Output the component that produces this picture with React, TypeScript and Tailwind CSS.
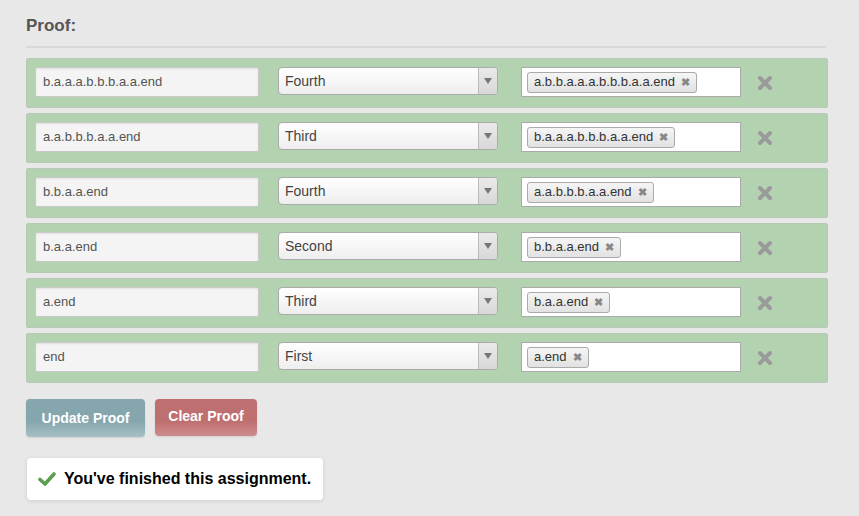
const rows = [
  { line: "b.a.a.a.b.b.b.a.a.end", rule: "Fourth", cite: "a.b.b.a.a.a.b.b.b.a.a.end" },
  { line: "a.a.b.b.b.a.a.end", rule: "Third", cite: "b.a.a.a.b.b.b.a.a.end" },
  { line: "b.b.a.a.end", rule: "Fourth", cite: "a.a.b.b.b.a.a.end" },
  { line: "b.a.a.end", rule: "Second", cite: "b.b.a.a.end" },
  { line: "a.end", rule: "Third", cite: "b.a.a.end" },
  { line: "end", rule: "First", cite: "a.end" },
];

function RemoveIcon() {
  return (
    <svg width="16" height="16" viewBox="0 0 16 16" className="shrink-0">
      <path d="M3 3 L13 13 M13 3 L3 13" stroke="#9a9a9a" strokeWidth="4" strokeLinecap="round" />
    </svg>
  );
}

function ProofRow({ line, rule, cite }: { line: string; rule: string; cite: string }) {
  return (
    <div className="flex items-start h-[50px] border border-[#b9c9b7] rounded-[2px] bg-[#b2d2b0] pt-2 pl-2">
      <div className="w-[224px] h-[30px] flex items-center px-[7px] bg-[#f4f4f4] border border-[#c9c9c9] rounded-[2px] shadow-[inset_0_1px_2px_rgba(0,0,0,0.08)] text-[13px] text-[#555]">
        {line}
      </div>
      <div className="ml-[19px] w-[220px] h-[28px] flex border border-[#aaa] rounded-[4px] bg-gradient-to-b from-white to-[#eeeeee] overflow-hidden">
        <div className="flex-1 flex items-center px-[6px] text-[14px] text-[#444]">{rule}</div>
        <div className="w-[19px] flex items-center justify-center border-l border-[#bbb] bg-gradient-to-b from-[#eaeaea] to-[#d8d8d8]">
          <svg width="8" height="6" viewBox="0 0 8 6">
            <path d="M0 0 L8 0 L4 6 Z" fill="#777" />
          </svg>
        </div>
      </div>
      <div className="ml-[23px] w-[220px] h-[30px] flex items-center pl-[5px] bg-white border border-[#aaa]">
        <div className="h-[21px] flex items-center gap-[6px] pl-[6px] pr-[6px] border border-[#aaa] rounded-[3px] bg-gradient-to-b from-[#f5f5f5] to-[#e2e2e2] text-[13px] text-[#333]">
          <span>{cite}</span>
          <span className="text-[#888] text-[11px] font-bold leading-none">✖</span>
        </div>
      </div>
      <div className="ml-[16px] mt-[8px]">
        <RemoveIcon />
      </div>
    </div>
  );
}

export default function App() {
  return (
    <div className="min-h-[516px] bg-[#e8e8e8] font-['Liberation_Sans',Arial,sans-serif] pl-[26px] pt-[16px]">
      <div className="w-[802px]">
        <h2 className="text-[17px] font-bold text-[#555] leading-[20px]">Proof:</h2>
        <div className="mt-[10px] mr-[2px] h-[2px] bg-[#d8d8d8]" />
        <div className="mt-[10px] flex flex-col gap-[5px]">
          {rows.map((r, i) => (
            <ProofRow key={i} {...r} />
          ))}
        </div>
        <div className="mt-[16px] flex items-start gap-[10px]">
          <button className="w-[119px] h-[38px] rounded-[4px] bg-gradient-to-b from-[#86a6ae] from-60% to-[#a6c1c6] text-white font-bold text-[14px] shadow-[0_1px_2px_rgba(0,0,0,0.1)]">
            Update Proof
          </button>
          <button className="w-[102px] h-[37px] pb-[2px] rounded-[4px] bg-gradient-to-b from-[#be6f6f] from-60% to-[#cd8c8c] text-white font-bold text-[14px] shadow-[0_1px_2px_rgba(0,0,0,0.1)]">
            Clear Proof
          </button>
        </div>
        <div className="mt-[21px] ml-[1px] inline-flex items-center gap-[8px] h-[42px] pl-[11px] pr-[12px] bg-white rounded-[4px] shadow-[0_1px_4px_rgba(0,0,0,0.12)]">
          <svg width="18" height="16" viewBox="0 0 18 16">
            <path d="M2 8.5 L7 13 L16 3" stroke="#5a9f4e" strokeWidth="3.6" fill="none" strokeLinecap="round" strokeLinejoin="round" />
          </svg>
          <span className="text-[16px] font-bold text-black">You've finished this assignment.</span>
        </div>
      </div>
    </div>
  );
}
